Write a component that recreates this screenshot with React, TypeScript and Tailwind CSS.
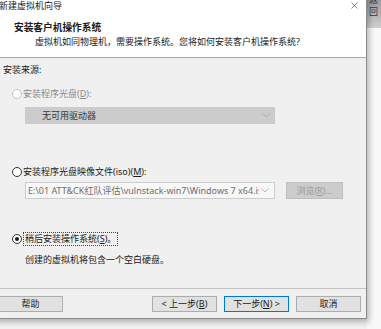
import React from 'react';
import { X } from 'lucide-react';

const Key = ({ k }: { k: string }) => <span className="underline underline-offset-1">{k}</span>;

const Radio = ({ checked, disabled }: { checked?: boolean; disabled?: boolean }) => (
  <span
    className={`w-[10px] h-[10px] shrink-0 rounded-full border bg-white flex items-center justify-center ${
      disabled ? 'border-[#c4c4c4]' : 'border-[#333]'
    }`}
  >
    {checked && <span className="w-[4px] h-[4px] rounded-full bg-[#1a1a1a]" />}
  </span>
);

const Chevron = () => (
  <svg width="8" height="5" viewBox="0 0 8 5" className="shrink-0">
    <polyline points="0.5,0.5 4,4 7.5,0.5" fill="none" stroke="#a8a8a8" strokeWidth="0.8" />
  </svg>
);

const Button = ({ children, primary }: { children: React.ReactNode; primary?: boolean }) => (
  <div
    className={`w-[65px] h-[16px] flex items-center justify-center bg-[#e1e1e1] border ${
      primary ? 'border-[#0078d7]' : 'border-[#adadad]'
    }`}
  >
    {children}
  </div>
);

export default function App() {
  return (
    <div className="w-[381px] h-[329px] overflow-hidden bg-[#f2f2f2] flex font-['Noto_Sans','Noto_Sans_CJK_SC',sans-serif] text-[9px] leading-[12px] text-[#1a1a1a]">
      {/* wizard dialog */}
      <div className="relative z-10 ml-[-8px] mt-[-6px] w-[375px] h-[325px] shrink-0 flex flex-col bg-[#f0f0f0] border border-[#8a8a8a] shadow-[2px_3px_6px_rgba(0,0,0,0.28)]">
        <div className="h-[21px] bg-white flex items-center justify-between pl-[6px] pr-[6px]">
          <span>新建虚拟机向导</span>
          <X size={11} strokeWidth={1.2} className="text-[#222]" />
        </div>

        <div className="h-[41px] bg-white pl-[21px] pt-[6px]">
          <div className="font-bold text-[9.7px]">安装客户机操作系统</div>
          <div className="pl-[21px] mt-[2px]">虚拟机如同物理机，需要操作系统。您将如何安装客户机操作系统?</div>
        </div>
        <div className="h-px bg-[#a8a8a8]" />

        <div className="h-[230px] pl-[10px] pt-[6px]">
          <div>安装来源:</div>

          <div className="mt-[11px] ml-[9px] h-[14px] flex items-center gap-[1px] text-[#8a8a8a]">
            <Radio disabled />
            <span>
              安装程序光盘(<Key k="D" />):
            </span>
          </div>
          <div className="mt-[6px] ml-[22px] w-[250px] h-[17px] bg-[#cccccc] flex items-center justify-between pl-[17px] pr-[5px] text-[#3a3a3a]">
            <span>无可用驱动器</span>
            <Chevron />
          </div>

          <div className="mt-[41px] ml-[9px] h-[14px] flex items-center gap-[1px]">
            <Radio />
            <span>
              安装程序光盘映像文件(iso)(<Key k="M" />):
            </span>
          </div>
          <div className="mt-[3px] ml-[22px] flex gap-[11px]">
            <div className="w-[250px] h-[17px] bg-[#f7f7f7] border border-[#cccccc] flex items-center pl-[2px] pr-[5px] gap-[2px] text-[#6d6d6d]">
              <span className="flex-1 overflow-hidden whitespace-nowrap">
                E:\01 ATT&amp;CK红队评估\vulnstack-win7\Windows 7 x64.iso
              </span>
              <Chevron />
            </div>
            <div className="w-[57px] h-[17px] bg-[#cccccc] border border-[#bfbfbf] flex items-center justify-center text-[#9a9a9a]">
              <span>
                浏览(<Key k="R" />)...
              </span>
            </div>
          </div>

          <div className="mt-[33px] ml-[9px] h-[14px] flex items-center gap-[1px]">
            <Radio checked />
            <span className="border border-dotted border-[#444] px-[1px] leading-[12px]">
              稍后安装操作系统(<Key k="S" />)。
            </span>
          </div>
          <div className="mt-[8px] ml-[22px]">创建的虚拟机将包含一个空白硬盘。</div>
        </div>

        <div className="h-px bg-[#c4c4c4]" />
        <div className="flex-1 flex items-start pt-[7px] pl-[5px] pr-[5px]">
          <Button>帮助</Button>
          <div className="flex-1" />
          <div className="flex gap-[7px]">
            <Button>
              &lt; 上一步(<Key k="B" />)
            </Button>
            <Button primary>
              下一步(<Key k="N" />) &gt;
            </Button>
            <Button>取消</Button>
          </div>
        </div>
      </div>

      {/* window behind the dialog */}
      <div className="flex-1 flex flex-col">
        <div className="h-[28px] bg-gradient-to-b from-[#9c9c9c] to-[#cfcfcf] overflow-hidden text-[#2c3a55]">
          <span className="block mt-[-6px] pl-[2px]">返回</span>
        </div>
        <div className="flex-1 bg-[#f8f8f8]" />
      </div>
    </div>
  );
}
